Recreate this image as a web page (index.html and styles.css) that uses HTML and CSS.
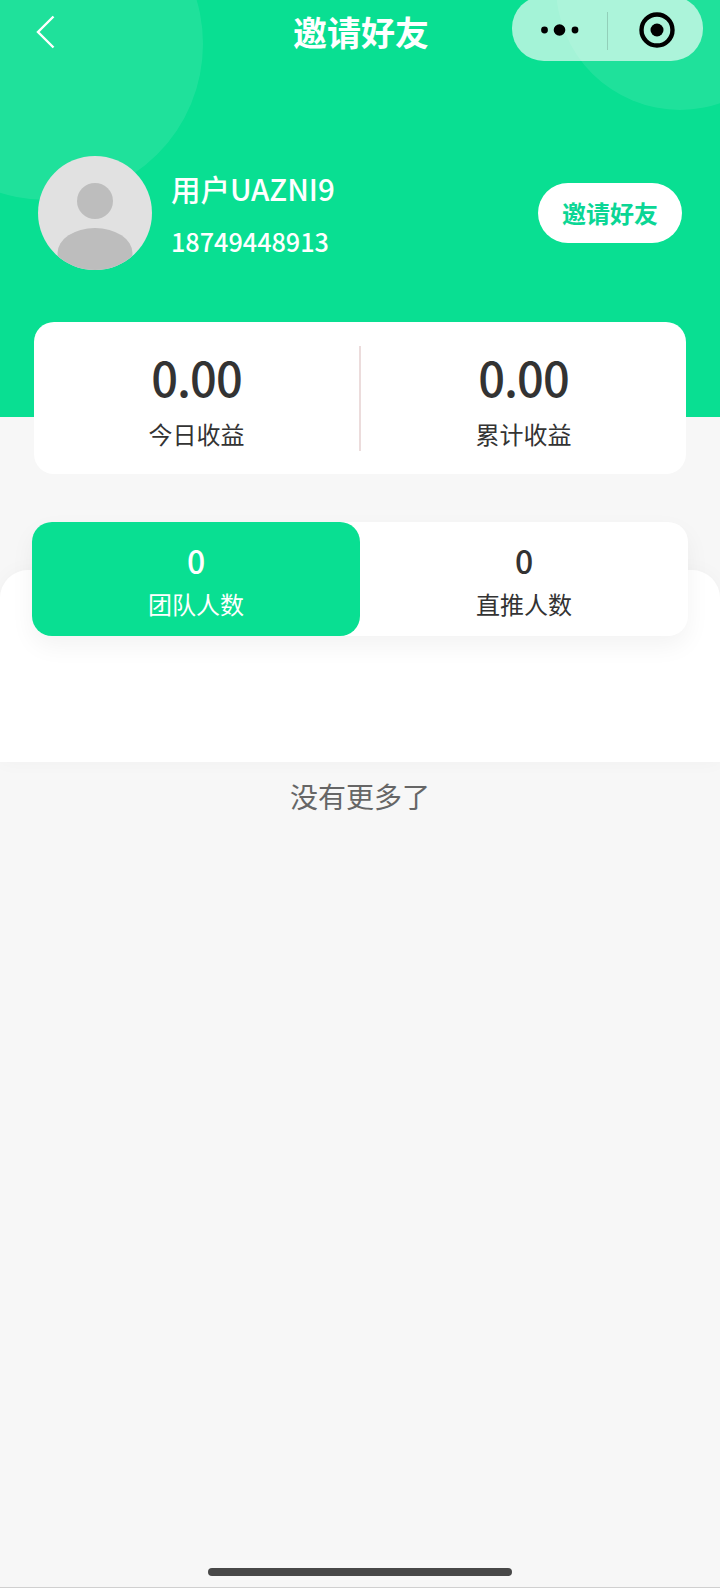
FILE: index.html
```html
<!DOCTYPE html>
<html lang="zh-CN">
<head>
    <meta charset="UTF-8">
    <meta name="viewport" content="width=device-width, initial-scale=1.0">
    <link rel="stylesheet" href="styles.css">
    <title>邀请好友</title>
</head>
<body>
    <div class="page">
        <div class="hero">
            <div class="bubble bubble-left"></div>
            <div class="bubble bubble-right"></div>

            <div class="nav">
                <svg class="back" width="20" height="34" viewBox="0 0 20 34">
                    <path d="M17.5 1.5 L2 17 L17.5 32.500" fill="none" stroke="#fff" stroke-width="2.4"/>
                </svg>
                <div class="nav-title">邀请好友</div>
                <div class="capsule">
                    <svg class="capsule-dots" width="44" height="14" viewBox="0 0 44 14">
                        <circle cx="5.500" cy="7" r="3.400" fill="#000"/>
                        <circle cx="20.500" cy="7" r="5.800" fill="#000"/>
                        <circle cx="36" cy="7" r="3.400" fill="#000"/>
                    </svg>
                    <div class="capsule-line"></div>
                    <svg class="capsule-target" width="38" height="38" viewBox="0 0 38 38">
                        <circle cx="19" cy="19" r="15.500" fill="none" stroke="#000" stroke-width="4.400"/>
                        <circle cx="19" cy="19" r="6.500" fill="#000"/>
                    </svg>
                </div>
            </div>

            <div class="profile">
                <svg class="avatar" width="114" height="114" viewBox="0 0 114 114">
                    <clipPath id="avatarClip"><circle cx="57" cy="57" r="57"/></clipPath>
                    <g clip-path="url(#avatarClip)">
                        <rect width="114" height="114" fill="#e1e1e1"/>
                        <circle cx="57" cy="45" r="18" fill="#bdbdbd"/>
                        <ellipse cx="57" cy="97" rx="37.500" ry="25" fill="#bdbdbd"/>
                    </g>
                </svg>
                <div class="user">
                    <div class="user-name">用户UAZNI9</div>
                    <div class="user-phone">18749448913</div>
                </div>
                <div class="invite-btn">邀请好友</div>
            </div>
        </div>

        <div class="income-card">
            <div class="income-item">
                <div class="income-num">0.00</div>
                <div class="income-label">今日收益</div>
            </div>
            <div class="income-line"></div>
            <div class="income-item">
                <div class="income-num">0.00</div>
                <div class="income-label">累计收益</div>
            </div>
        </div>

        <div class="sheet">
            <div class="tabs">
                <div class="tab tab-active">
                    <div class="tab-num">0</div>
                    <div class="tab-label">团队人数</div>
                </div>
                <div class="tab">
                    <div class="tab-num">0</div>
                    <div class="tab-label">直推人数</div>
                </div>
            </div>
        </div>

        <div class="no-more">没有更多了</div>

        <div class="home-bar"></div>
    </div>
</body>
</html>
```

FILE: styles.css
```css
* {
    box-sizing: border-box;
}

body {
    margin: 0;
    background-color: #f7f7f7;
    font-family: "Noto Sans CJK SC", "Noto Sans", sans-serif;
    color: #333;
}

.page {
    display: flex;
    flex-direction: column;
    height: 1588px;
    overflow: hidden;
    border-bottom: 1px solid #d0d0d0;
}

/* green top area */
.hero {
    position: relative;
    flex: none;
    height: 417px;
    overflow: hidden;
    background-color: #09df92;
}

.bubble {
    position: absolute;
    border-radius: 50%;
    background-color: rgba(255, 255, 255, 0.09);
}

.bubble-left {
    left: -109px;
    top: -112px;
    width: 312px;
    height: 312px;
}

.bubble-right {
    left: 556px;
    top: -138px;
    width: 248px;
    height: 248px;
}

.nav {
    position: relative;
    display: grid;
    grid-template-columns: 1fr auto 1fr;
    align-items: center;
    height: 65px;
    margin-top: -4px;
    padding: 0 17px;
}

.back {
    margin-left: 19px;
    margin-top: 6px;
}

.nav-title {
    margin-top: 6px;
    margin-left: 2px;
    font-size: 34px;
    font-weight: 700;
    color: #fff;
}

.capsule {
    display: flex;
    align-items: center;
    justify-self: end;
    width: 191px;
    height: 65px;
    border-radius: 32px;
    background-color: rgba(255, 255, 255, 0.63);
}

.capsule-dots {
    margin-left: 27px;
    margin-top: 3px;
}

.capsule-line {
    width: 1px;
    height: 38px;
    margin-left: 24px;
    margin-top: 4px;
    background-color: rgba(0, 0, 0, 0.15);
}

.capsule-target {
    margin-left: 30px;
    margin-top: 3px;
}

.profile {
    position: relative;
    display: flex;
    align-items: center;
    margin-top: 95px;
    padding: 0 38px;
}

.user {
    flex: 1;
    margin-left: 19px;
    color: #fff;
}

.user-name {
    font-size: 29.5px;
    font-weight: 500;
    line-height: 40px;
}

.user-phone {
    margin-top: 15px;
    font-size: 25.2px;
    font-weight: 500;
    line-height: 36px;
}

.invite-btn {
    width: 144px;
    height: 60px;
    border-radius: 30px;
    background-color: #fff;
    color: #0bd695;
    font-size: 24px;
    font-weight: 700;
    line-height: 60px;
    text-align: center;
}

/* income card */
.income-card {
    position: relative;
    display: flex;
    align-items: center;
    flex: none;
    height: 152px;
    margin: -95px 34px 0;
    border-radius: 20px;
    background-color: #fff;
}

.income-item {
    flex: 1;
    padding-top: 2px;
    text-align: center;
}

.income-num {
    font-size: 47px;
    font-weight: 500;
    line-height: 60px;
    letter-spacing: -1px;
}

.income-label {
    margin-top: 10px;
    font-size: 24px;
    line-height: 34px;
}

.income-line {
    width: 2px;
    height: 105px;
    background-color: #ecdcdc;
}

/* white sheet with the tabs on its top edge */
.sheet {
    flex: none;
    height: 192px;
    margin-top: 96px;
    border-radius: 28px 28px 0 0;
    background-color: #fff;
    box-shadow: 0 0 20px rgba(0, 0, 0, 0.03);
}

.tabs {
    display: flex;
    height: 114px;
    margin: -48px 32px 0;
    border-radius: 20px;
    background-color: #fff;
    box-shadow: 0 10px 24px rgba(0, 0, 0, 0.05);
}

.tab {
    flex: 1;
    padding-top: 15px;
    border-radius: 20px;
    text-align: center;
}

.tab-active {
    background-color: #09df92;
    color: #fff;
}

.tab-num {
    font-size: 32px;
    font-weight: 500;
    line-height: 46px;
}

.tab-label {
    margin-top: 4px;
    font-size: 24px;
    line-height: 34px;
}

.no-more {
    margin-top: 14px;
    font-size: 28px;
    line-height: 40px;
    color: #666;
    text-align: center;
}

.home-bar {
    flex: none;
    width: 304px;
    height: 8px;
    margin: auto auto 11px;
    border-radius: 4px;
    background-color: #484848;
}
```
